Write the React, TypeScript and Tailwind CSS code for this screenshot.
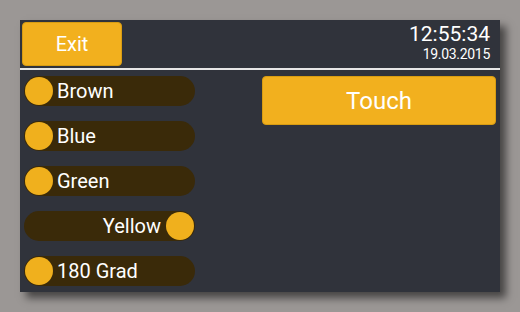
const toggles = [
  { label: "Brown", on: false },
  { label: "Blue", on: false },
  { label: "Green", on: false },
  { label: "Yellow", on: true },
  { label: "180 Grad", on: false },
]

function Toggle({ label, on }: { label: string; on: boolean }) {
  return (
    <div
      className={`flex h-[30px] w-[171px] items-center rounded-full bg-[#3a2a09] px-[1px] ${
        on ? "flex-row-reverse" : "flex-row"
      }`}
    >
      <div className="h-[28px] w-[28px] shrink-0 rounded-full bg-[#f0b01d]" />
      <span className={`text-[20px] leading-none text-white ${on ? "mr-[5px]" : "ml-[4px]"}`}>
        {label}
      </span>
    </div>
  )
}

export default function App() {
  return (
    <div
      className="h-[312px] w-[520px] bg-[#9b9795] p-5"
      style={{ fontFamily: "Roboto, 'Liberation Sans', sans-serif" }}
    >
      <div className="flex h-[272px] w-[480px] flex-col bg-[#30333b] shadow-[6px_6px_8px_rgba(0,0,0,0.55)]">
        <div className="flex h-[48px] items-start justify-between pl-[2px] pr-[10px] pt-[2px]">
          <button className="h-[44px] w-[100px] rounded-[4px] border border-[#d89c12] bg-[#f2b01e] text-[20px] text-white">
            Exit
          </button>
          <div className="flex flex-col items-end">
            <span className="text-[21px] leading-[24px] text-white">12:55:34</span>
            <span className="text-[14px] leading-[16px] tracking-[-0.3px] text-white">19.03.2015</span>
          </div>
        </div>
        <div className="h-[2px] bg-[#e6e6e6]" />
        <div className="flex flex-1 pt-[6px]">
          <div className="flex w-[242px] flex-col gap-[15px] pl-[4px]">
            {toggles.map((t) => (
              <Toggle key={t.label} label={t.label} on={t.on} />
            ))}
          </div>
          <div className="flex-1 pr-[4px]">
            <button className="h-[49px] w-full rounded-[4px] border border-[#d89c12] bg-[#f2b01e] text-[24px] text-white">
              Touch
            </button>
          </div>
        </div>
      </div>
    </div>
  )
}
